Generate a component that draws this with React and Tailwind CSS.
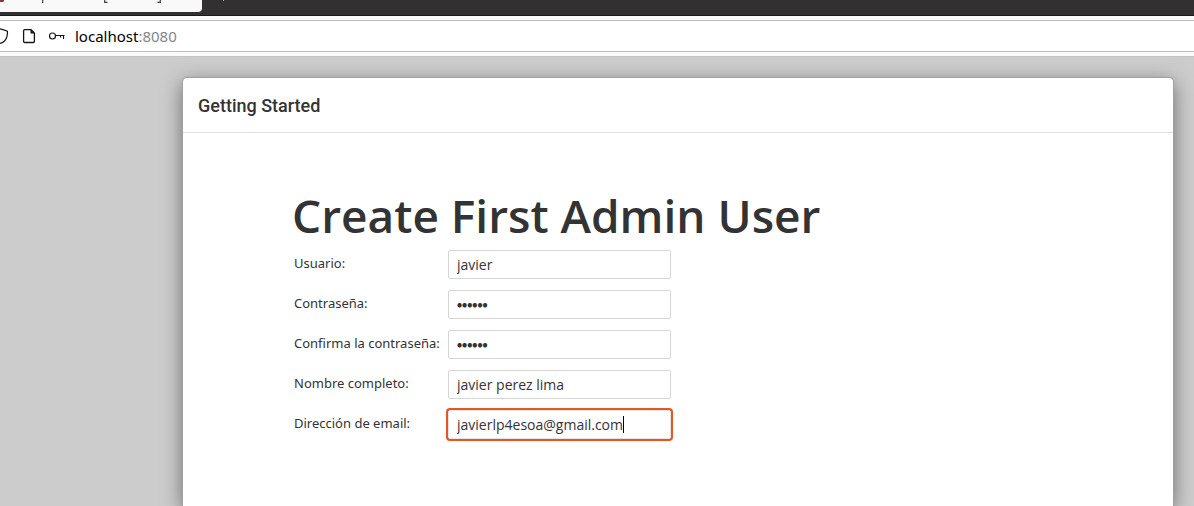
import React from "react";

function Field({ id, label, type = "text", value, active }) {
  return (
    <>
      <label
        htmlFor={id}
        className="whitespace-nowrap pt-[3px] font-['Noto_Sans',sans-serif] text-[13px] leading-5 text-[#333333]"
      >
        {label}
      </label>
      <div className="relative h-[29px]">
        <input
          id={id}
          type={type}
          defaultValue={value}
          className={
            "block h-full w-full rounded-xs border bg-white px-2 text-[#333333] outline-none " +
            (type === "password" ? "text-[13px] font-extrabold " : "text-sm ") +
            (active ? "border-[#e4e4e4] ring-2 ring-[#e95420]" : "border-[#d6d6d6]")
          }
        />
        {active && (
          <span className="pointer-events-none absolute inset-0 flex items-center pl-[9px] text-sm">
            <span className="invisible">{value}</span>
            <span className="h-[17px] w-px bg-black" />
          </span>
        )}
      </div>
    </>
  );
}

export default function App() {
  return (
    <div className="flex h-screen flex-col overflow-hidden bg-[#cccccc] font-['Open_Sans','Noto_Sans',sans-serif]">
      <header className="shrink-0">
        <div className="flex h-4 items-start overflow-hidden border-b border-[#1c1b1b] bg-[#323031]">
          <div className="flex h-3 w-[202px] items-end overflow-hidden rounded-br-sm bg-[#f9f9fa]">
            <svg width="202" height="12" viewBox="0 0 202 12" fill="none" aria-hidden="true">
              <path d="M0 0H4V1.5L2.5 2H0Z" fill="#8b3342" />
              <path d="M42.7 0V3M104.7 0V2.4H107.5M157.5 2.4H160.3V0" stroke="#3c3c44" strokeWidth="1.2" />
            </svg>
          </div>
          <svg width="40" height="4" viewBox="0 0 40 4" aria-hidden="true">
            <path d="M21 0h1v1h-1z" fill="#b5b5b5" />
          </svg>
        </div>
        <div className="border-b border-[#c4c4c4] bg-[#f9f9fa] py-1">
          <div className="flex h-8 items-center border-y border-[#bdbdbd] bg-white">
            <svg width="70" height="30" viewBox="0 0 70 30" fill="none" stroke="#15141a" aria-hidden="true">
              <path d="M0 7.8Q4 8.5 7.4 10.2Q7.8 16.5 4.5 20Q2.4 22 0 22.3" strokeWidth="1.2" />
              <path d="M25 8.6H31L34.4 12V20.4Q34.4 21.5 33.3 21.5H24.7Q23.6 21.5 23.6 20.4V9.7Q23.6 8.6 24.7 8.6Z" strokeWidth="1.3" />
              <path d="M30.5 8.5V12.5H34.6Z" fill="#15141a" stroke="none" />
              <circle cx="52.5" cy="15" r="3" strokeWidth="1.2" />
              <path d="M55.5 14.5H64.5M63.5 14.5V18M60.5 14.5V16.5" strokeWidth="1.1" />
            </svg>
            <span className="pl-[5px] font-['Noto_Sans',sans-serif] text-[15px] leading-5 text-black">
              localhost<span className="text-[#85858a]">:8080</span>
            </span>
          </div>
        </div>
      </header>

      <div className="flex min-h-0 flex-1 flex-col pl-[183px] pr-[21px] pt-[21px]">
        <section className="flex-1 rounded-t bg-white shadow-[0_0_0_1px_#a0a0a0,0_5px_20px_rgba(0,0,0,0.5)]">
          <div className="border-b border-[#e1e1e1] px-[15px] pb-[13px] pt-[14px]">
            <h2 className="font-['Roboto',sans-serif] text-lg font-medium leading-[27px] text-[#333333]">
              Getting Started
            </h2>
          </div>
          <form className="px-[109px] pt-[52px]">
            <h1 className="whitespace-nowrap text-[46px] font-semibold leading-[60px] text-[#333333]">
              Create First Admin User
            </h1>
            <div className="mt-[5px] grid grid-cols-[154px_223px] gap-y-[11px] pl-[2px]">
              <Field id="username" label="Usuario:" value="javier" />
              <Field id="password" label="Contraseña:" type="password" value="secret" />
              <Field id="confirm" label="Confirma la contraseña:" type="password" value="secret" />
              <Field id="fullname" label="Nombre completo:" value="javier perez lima" />
              <Field id="email" label="Dirección de email:" type="email" value="javierlp4esoa@gmail.com" active />
            </div>
          </form>
        </section>
      </div>
    </div>
  );
}
